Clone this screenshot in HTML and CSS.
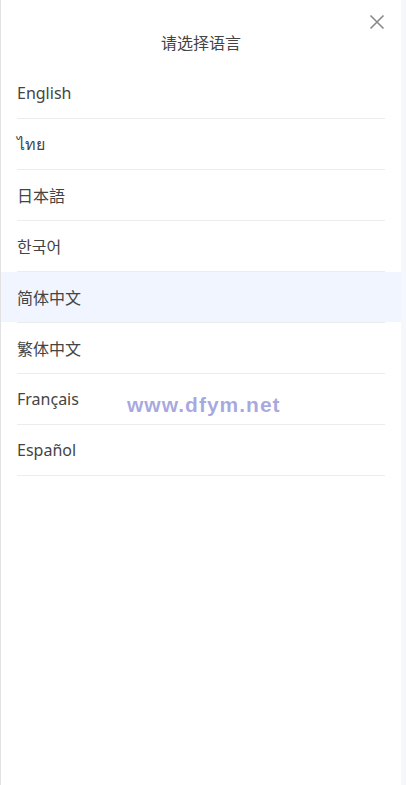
FILE: index.html
```html
<!doctype html>
<html>
<head>
  <meta charset="utf-8">
  <link rel="stylesheet" href="styles.css">
</head>
<body>
  <div class="drawer">
    <div class="header">
      <span class="title">请选择语言</span>
      <button class="close" aria-label="close">
        <svg width="16" height="16" viewBox="0 0 16 16">
          <path d="M1.5 1.5 L14.5 14.5 M14.5 1.5 L1.5 14.5" stroke="#888" stroke-width="1.6" fill="none"/>
        </svg>
      </button>
    </div>
    <ul class="langs">
      <li class="lang">English</li>
      <li class="lang">ไทย</li>
      <li class="lang">日本語</li>
      <li class="lang">한국어</li>
      <li class="lang active">简体中文</li>
      <li class="lang">繁体中文</li>
      <li class="lang">Français</li>
      <li class="lang">Español</li>
    </ul>
  </div>
  <div class="watermark">www.dfym.net</div>
</body>
</html>
```

FILE: styles.css
```css
    html, body{
      margin: 0;
      height: 100%;
    }
    body{
      background: #f6f7fc;
      font-family: "Noto Sans", "Noto Sans CJK SC", sans-serif;
      color: #444;
      overflow: hidden;
    }
    .drawer{
      width: 400px;
      height: 785px;
      background: #fff;
      border-left: 1px solid #e2e2e2;
    }
    .header{
      position: relative;
      height: 68px;
      display: flex;
      align-items: center;
      justify-content: center;
      padding-top: 16px;
      box-sizing: border-box;
    }
    .title{
      font-size: 16px;
      color: #444;
      font-family: "Noto Sans CJK SC", sans-serif;
    }
    .close{
      position: absolute;
      top: 14px;
      right: 16px;
      border: none;
      background: none;
      padding: 0;
      width: 16px;
      height: 16px;
    }
    .close svg{
      display: block;
    }
    .langs{
      list-style: none;
      margin: 0;
      padding: 0;
    }
    .lang{
      height: 50px;
      margin: 0;
      padding: 0 16px;
      display: flex;
      align-items: center;
      font-size: 16px;
      color: #444;
      position: relative;
    }
    .lang::after{
      content: "";
      position: absolute;
      left: 16px;
      right: 16px;
      bottom: -1px;
      height: 1px;
      background: #ececec;
    }
    .lang + .lang{
      margin-top: 1px;
    }
    .lang.active{
      background: #f0f5ff;
    }
    .watermark{
      position: absolute;
      left: 127px;
      top: 393px;
      font-family: "Liberation Sans", sans-serif;
      font-weight: bold;
      font-size: 21px;
      color: rgba(110, 110, 205, 0.6);
      letter-spacing: 1px;
    }
```
